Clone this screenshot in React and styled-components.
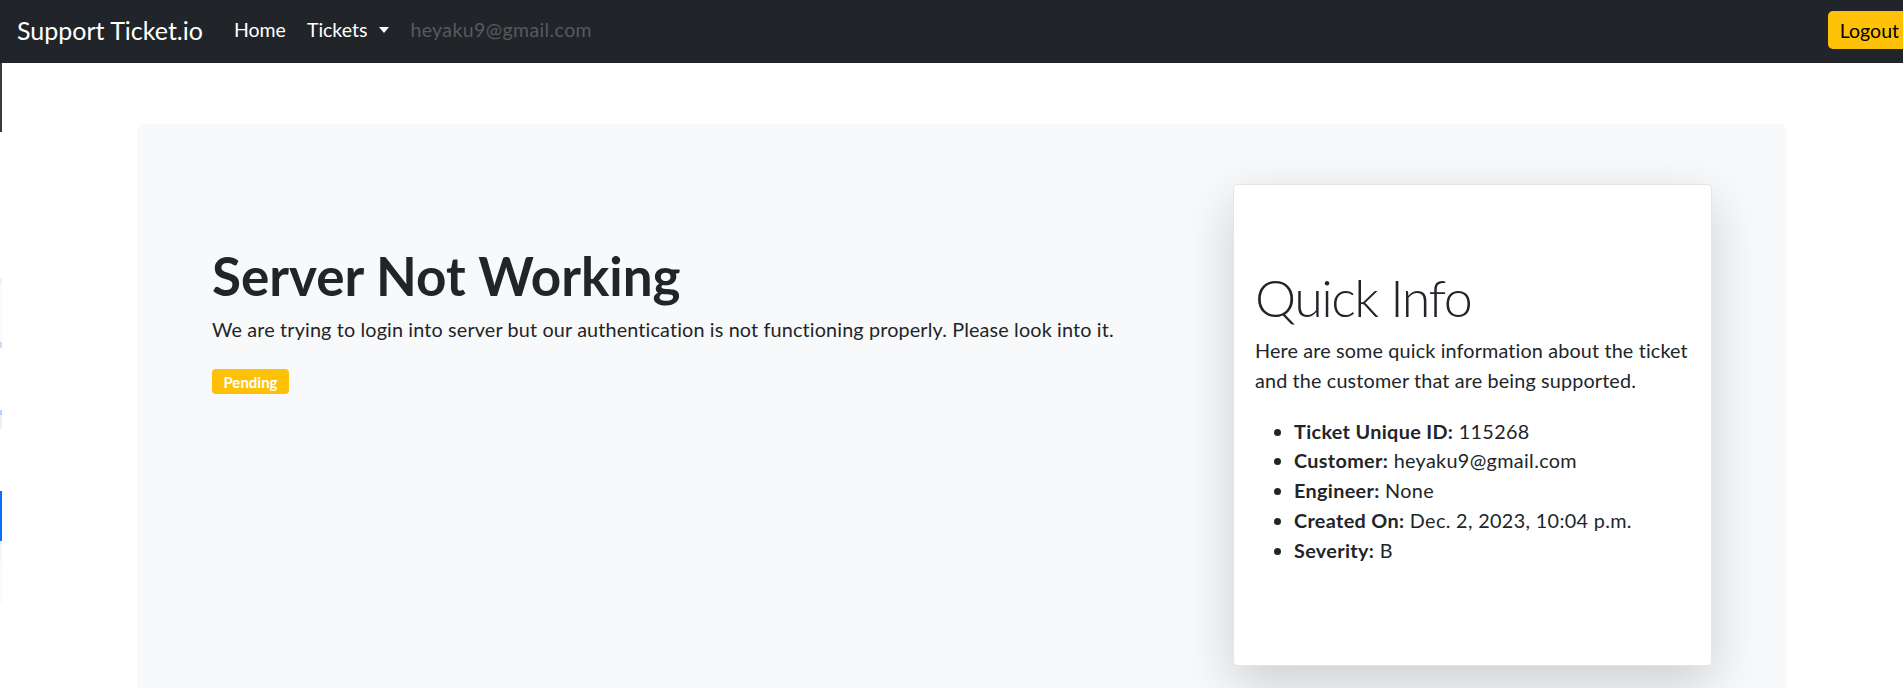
import React from 'react';
import styled, { createGlobalStyle } from 'styled-components';

const GlobalStyle = createGlobalStyle`
  html, body {
    margin: 0;
    padding: 0;
    overflow-x: hidden;
  }
  body {
    font-family: Lato, "Open Sans", "Liberation Sans", sans-serif;
    color: #212529;
    background: #fff;
  }
  * {
    box-sizing: border-box;
  }
`;

const Navbar = styled.nav`
  display: flex;
  align-items: center;
  height: 63px;
  padding: 0 0 3px 17px;
  background: #212529;
`;

const Brand = styled.a`
  font-size: 25px;
  line-height: 1;
  color: #fff;
  text-decoration: none;
  margin-right: 31px;
  padding-top: 1px;
`;

const NavList = styled.ul`
  display: flex;
  align-items: center;
  gap: 21px;
  list-style: none;
  margin: 0;
  padding: 0;
`;

const NavLink = styled.a`
  font-size: 19.5px;
  line-height: 1;
  letter-spacing: ${p => (p.$disabled ? '0.4px' : '0')};
  color: ${p => (p.$disabled ? 'rgba(255,255,255,0.25)' : '#fff')};
  text-decoration: none;
  display: flex;
  align-items: center;

  ${p =>
    p.$dropdown &&
    `
    &::after {
      content: '';
      display: inline-block;
      margin-left: 12px;
      border-top: 6px solid #fff;
      border-left: 5px solid transparent;
      border-right: 5px solid transparent;
    }
  `}
`;

const LogoutButton = styled.button`
  margin-left: auto;
  margin-right: -8px;
  height: 38px;
  padding: 0 12px;
  border: none;
  border-radius: 5px;
  background: #ffc107;
  color: #000;
  font-family: inherit;
  font-size: 19.5px;
`;

const EdgeStrip = styled.div`
  position: fixed;
  left: 0;
  top: 63px;
  width: 2px;
  height: 540px;
  display: flex;
  flex-direction: column;
`;

const EdgeSeg = styled.div`
  height: ${p => p.$h}px;
  background: ${p => p.$c};
`;

const Main = styled.main`
  padding-top: 61px;
`;

const Jumbotron = styled.section`
  margin-left: 137px;
  width: 1650px;
  min-height: 640px;
  padding: 60px 75px 60px 75px;
  background: #f8f9fa;
  border-radius: 7px;
  display: grid;
  grid-template-columns: 1fr 479px;
  align-items: start;
`;

const Intro = styled.div`
  padding-top: 60px;
`;

const Title = styled.h1`
  margin: 0 0 7px;
  font-size: 53px;
  font-weight: 700;
  line-height: 1.2;
`;

const Lead = styled.p`
  margin: 0 0 ${p => p.$mb || 0}px;
  font-size: 19.8px;
  line-height: 1.5;
  letter-spacing: 0.15px;
`;

const Badge = styled.span`
  display: inline-flex;
  align-items: center;
  justify-content: center;
  width: 77px;
  height: 25px;
  border-radius: 4px;
  background: #ffc107;
  color: #fff;
  font-size: 15px;
  font-weight: 700;
`;

const Card = styled.aside`
  height: 482px;
  padding: 81px 21px 0;
  background: #fff;
  border: 1px solid rgba(0, 0, 0, 0.1);
  border-radius: 5px;
  box-shadow: 0 18px 53px rgba(0, 0, 0, 0.175);
`;

const CardTitle = styled.h2`
  margin: 0 0 8px;
  font-size: 52px;
  font-weight: 300;
  line-height: 1.2;
  letter-spacing: -1.5px;
`;

const InfoList = styled.ul`
  margin: 0;
  padding-left: 39px;
  font-size: 19.8px;
  line-height: 1.5;
  letter-spacing: 0.35px;
`;

const edge = [
  { h: 69, c: '#3a3b3d' },
  { h: 146, c: '#ffffff' },
  { h: 6, c: '#f1f1f1' },
  { h: 58, c: '#fafafa' },
  { h: 6, c: '#c9dcf7' },
  { h: 62, c: '#ffffff' },
  { h: 5, c: '#b9d3f7' },
  { h: 14, c: '#efefef' },
  { h: 62, c: '#ffffff' },
  { h: 50, c: '#0d6efd' },
  { h: 20, c: '#f5f5f5' },
  { h: 42, c: '#fafafa' },
];

const info = [
  ['Ticket Unique ID:', '115268'],
  ['Customer:', 'heyaku9@gmail.com'],
  ['Engineer:', 'None'],
  ['Created On:', 'Dec. 2, 2023, 10:04 p.m.'],
  ['Severity:', 'B'],
];

export default function App() {
  return (
    <>
      <GlobalStyle />
      <Navbar>
        <Brand href="#">Support Ticket.io</Brand>
        <NavList>
          <li><NavLink href="#">Home</NavLink></li>
          <li><NavLink href="#" $dropdown>Tickets</NavLink></li>
          <li><NavLink $disabled>heyaku9@gmail.com</NavLink></li>
        </NavList>
        <LogoutButton>Logout</LogoutButton>
      </Navbar>

      <EdgeStrip>
        {edge.map((s, i) => (
          <EdgeSeg key={i} $h={s.h} $c={s.c} />
        ))}
      </EdgeStrip>

      <Main>
        <Jumbotron>
          <Intro>
            <Title>Server Not Working</Title>
            <Lead $mb={25}>
              We are trying to login into server but our authentication is not functioning properly. Please look into it.
            </Lead>
            <Badge>Pending</Badge>
          </Intro>

          <Card>
            <CardTitle>Quick Info</CardTitle>
            <Lead $mb={21}>
              Here are some quick information about the ticket and the customer that are being supported.
            </Lead>
            <InfoList>
              {info.map(([label, value]) => (
                <li key={label}>
                  <strong>{label}</strong> {value}
                </li>
              ))}
            </InfoList>
          </Card>
        </Jumbotron>
      </Main>
    </>
  );
}
